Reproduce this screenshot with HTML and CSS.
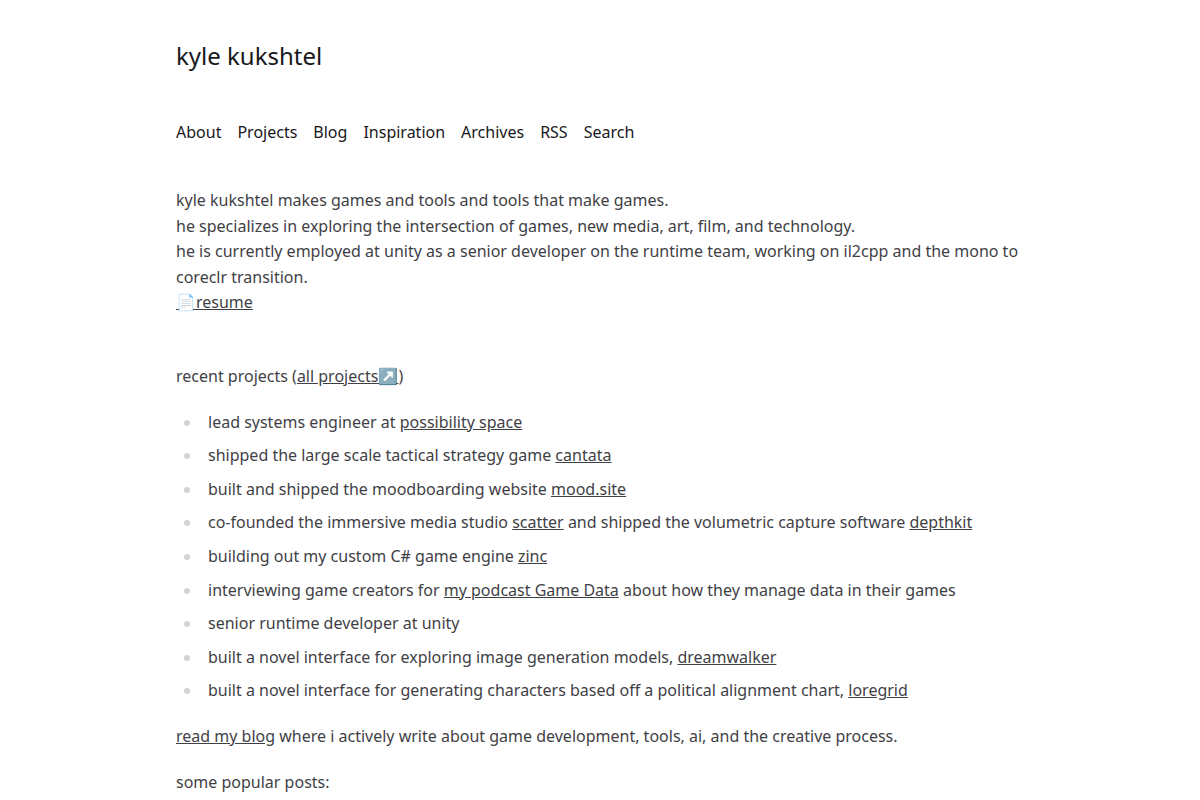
FILE: index.html
```html
<!DOCTYPE html>
<html lang="en">
<head>
  <meta charset="UTF-8">
  <meta name="viewport" content="width=device-width, initial-scale=1.0">
  <title>kyle kukshtel</title>
  <link rel="stylesheet" href="styles.css">
</head>
<body>
  <div class="page">
    <header>
      <h1 class="site-title"><a href="/">kyle kukshtel</a></h1>
      <nav class="site-nav">
        <a href="/about">About</a>
        <a href="/projects">Projects</a>
        <a href="/blog">Blog</a>
        <a href="/inspiration">Inspiration</a>
        <a href="/archives">Archives</a>
        <a href="/rss">RSS</a>
        <a href="/search">Search</a>
      </nav>
    </header>

    <main class="prose">
      <p class="intro">
        kyle kukshtel makes games and tools and tools that make games.<br>
        he specializes in exploring the intersection of games, new media, art, film, and technology.<br>
        he is currently employed at unity as a senior developer on the runtime team, working on il2cpp and the mono to coreclr transition.<br>
        <a href="/resume">📄resume</a>
      </p>

      <p>recent projects (<a href="/projects">all projects↗️</a>)</p>
      <ul>
        <li>lead systems engineer at <a href="#">possibility space</a></li>
        <li>shipped the large scale tactical strategy game <a href="#">cantata</a></li>
        <li>built and shipped the moodboarding website <a href="#">mood.site</a></li>
        <li>co-founded the immersive media studio <a href="#">scatter</a> and shipped the volumetric capture software <a href="#">depthkit</a></li>
        <li>building out my custom C# game engine <a href="#">zinc</a></li>
        <li>interviewing game creators for <a href="#">my podcast Game Data</a> about how they manage data in their games</li>
        <li>senior runtime developer at unity</li>
        <li>built a novel interface for exploring image generation models, <a href="#">dreamwalker</a></li>
        <li>built a novel interface for generating characters based off a political alignment chart, <a href="#">loregrid</a></li>
      </ul>

      <p><a href="/blog">read my blog</a> where i actively write about game development, tools, ai, and the creative process.</p>
      <p>some popular posts:</p>
    </main>
  </div>
</body>
</html>
```
FILE: styles.css
```css
* { box-sizing: border-box; }
body {
  margin: 0;
  background: #fff;
  color: #3f3f46;
  font-family: "Noto Sans", sans-serif;
  font-size: 16px;
  line-height: 1.6;
}
.page {
  max-width: 896px;
  margin: 0 auto;
  padding: 40px 24px 0;
}
.site-title {
  margin: 0;
  font-size: 24px;
  font-weight: 400;
  line-height: 32px;
}
.site-title a, .site-nav a {
  color: #18181b;
  text-decoration: none;
}
.site-nav {
  display: flex;
  flex-wrap: wrap;
  gap: 16px;
  margin-top: 48px;
  line-height: 24px;
}
.prose {
  margin-top: 44px;
}
.prose p {
  margin: 20px 0;
}
.prose .intro {
  margin-bottom: 48px;
}
.prose a {
  color: inherit;
  text-decoration: underline;
}
.prose ul {
  margin: 20px 0;
  padding-left: 26px;
}
.prose li {
  margin: 8px 0;
  padding-left: 6px;
}
.prose li::marker {
  color: #d4d4d8;
}
```
